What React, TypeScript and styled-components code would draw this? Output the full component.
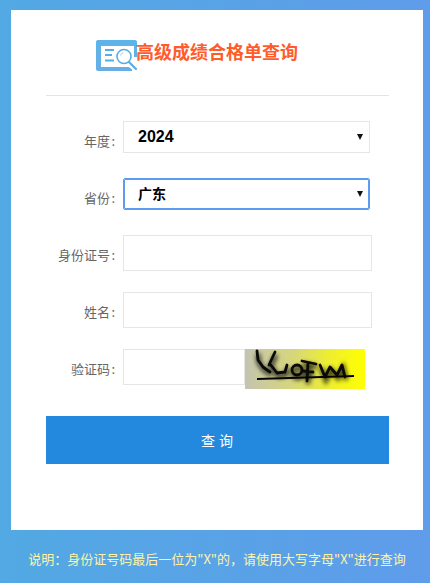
import React from "react";
import styled, { createGlobalStyle } from "styled-components";

const Global = createGlobalStyle`
  html, body { margin: 0; padding: 0; height: 100%; }
  body { font-family: "Noto Sans CJK SC", "Liberation Sans", sans-serif; }
  * { box-sizing: border-box; }
`;

const Page = styled.div`
  width: 430px;
  height: 583px;
  padding: 10px 7px 0 11px;
  background: linear-gradient(90deg, #52a9e3 0%, #5f9cea 100%);
  overflow: hidden;
`;

const Card = styled.main`
  width: 412px;
  height: 520px;
  background: #fff;
  padding: 0 34px 0 35px;
`;

const Header = styled.header`
  height: 86px;
  border-bottom: 1px solid #e4e4e4;
  padding: 30px 0 0 50px;
  display: flex;
  align-items: flex-start;
`;

const Logo = styled.svg`
  width: 42px;
  height: 32px;
  flex: none;
  margin-right: -1px;
`;

const Title = styled.h1`
  margin: -1px 0 0 -1px;
  font-size: 18px;
  line-height: 24px;
  font-weight: 700;
  color: #ff5b2b;
  white-space: nowrap;
`;

const Form = styled.form`
  padding-top: 25px;
`;

const Row = styled.div`
  height: 57px;
  display: flex;
  align-items: flex-start;
`;

const Label = styled.label`
  width: 69px;
  flex: none;
  margin-right: 8px;
  font-size: 13px;
  line-height: 40px;
  color: #666;
  text-align: right;
  white-space: nowrap;

  &::after {
    content: ":";
    display: inline-block;
    width: 5px;
    text-align: right;
  }
`;

const SelectWrap = styled.div`
  position: relative;
  width: 247px;
  height: 32px;
`;

const Select = styled.select<{ $focused?: boolean; $latin?: boolean }>`
  appearance: none;
  width: 100%;
  height: 100%;
  margin: 0;
  padding: 0 0 2px 14px;
  background: #fff;
  border: 1px solid ${(p) => (p.$focused ? "#5b9bf0" : "#e6e6e6")};
  outline: ${(p) => (p.$focused ? "1px solid #5b9bf0" : "none")};
  outline-offset: -2px;
  border-radius: ${(p) => (p.$focused ? "2px" : "0")};
  font-family: ${(p) => (p.$latin ? '"Liberation Sans", sans-serif' : "inherit")};
  font-size: ${(p) => (p.$latin ? "16px" : "14px")};
  font-weight: 700;
  color: #000;
`;

const Arrow = styled.svg`
  position: absolute;
  top: 13px;
  right: 7px;
  width: 6px;
  height: 6px;
  pointer-events: none;
`;

const Input = styled.input<{ $w?: number }>`
  width: ${(p) => p.$w ?? 249}px;
  height: 36px;
  flex: none;
  padding: 0 10px;
  background: #fff;
  border: 1px solid #e6e6e6;
  outline: none;
  font-size: 14px;
`;

const Captcha = styled.svg`
  width: 120px;
  height: 40px;
  flex: none;
  display: block;
`;

const Submit = styled.button`
  display: block;
  width: 343px;
  height: 48px;
  margin-top: 10px;
  padding: 0 0 0 3px;
  border: 0;
  background: #2389df;
  color: #fff;
  font-family: inherit;
  font-size: 14px;
  letter-spacing: 4px;
`;

const Note = styled.p`
  width: 412px;
  margin: 0;
  padding-top: 19px;
  font-size: 13px;
  line-height: 20px;
  color: #fff3a6;
  text-align: center;
  white-space: nowrap;
`;

const SelectArrow = () => (
  <Arrow viewBox="0 0 6 6">
    <path d="M0 0H6L3 6Z" fill="#111" />
  </Arrow>
);

const NOTE_COLON = "\uFF1A";
const NOTE_COMMA = "\uFF0C";

export default function App() {
  return (
    <Page>
      <Global />
      <Card>
        <Header>
          <Logo viewBox="0 0 42 32">
            <defs>
              <linearGradient id="logoBg" x1="0" y1="0" x2="0" y2="1">
                <stop offset="0" stopColor="#5cb4ea" />
                <stop offset="1" stopColor="#68aee6" />
              </linearGradient>
            </defs>
            <path d="M2 0H39a2 2 0 0 1 2 2V17H36V31H2a2 2 0 0 1-2-2V2a2 2 0 0 1 2-2Z" fill="url(#logoBg)" />
            <rect x="5" y="6" width="33" height="21" fill="#fff" />
            <path d="M9 10H18M9 15H16M9 20.5H18" stroke="#58ade5" strokeWidth="2" fill="none" />
            <path d="M33 24L41 30" stroke="#fff" strokeWidth="5" />
            <circle cx="28" cy="16.5" r="7" fill="#fff" stroke="#58ade5" strokeWidth="1.6" />
            <path d="M33 22L40 29" stroke="#58ade5" strokeWidth="2.2" strokeLinecap="round" />
            <path d="M24.5 15.5a3.8 3.8 0 0 1 3-3" stroke="#a9d4f1" strokeWidth="1.2" fill="none" />
          </Logo>
          <Title>高级成绩合格单查询</Title>
        </Header>
        <Form>
          <Row>
            <Label>年度</Label>
            <SelectWrap>
              <Select $latin defaultValue="2024">
                <option>2024</option>
              </Select>
              <SelectArrow />
            </SelectWrap>
          </Row>
          <Row>
            <Label>省份</Label>
            <SelectWrap>
              <Select $focused defaultValue="广东">
                <option>广东</option>
              </Select>
              <SelectArrow />
            </SelectWrap>
          </Row>
          <Row>
            <Label>身份证号</Label>
            <Input />
          </Row>
          <Row>
            <Label>姓名</Label>
            <Input />
          </Row>
          <Row>
            <Label>验证码</Label>
            <Input $w={122} />
            <Captcha viewBox="0 0 120 40">
              <defs>
                <linearGradient id="capBg" x1="0" y1="0" x2="1" y2="0">
                  <stop offset="0" stopColor="#c4c4b0" />
                  <stop offset="0.4" stopColor="#d6d67c" />
                  <stop offset="0.7" stopColor="#eeee30" />
                  <stop offset="1" stopColor="#ffff00" />
                </linearGradient>
                <filter id="capBlur" x="-10%" y="-30%" width="120%" height="160%">
                  <feGaussianBlur stdDeviation="2.2" />
                </filter>
              </defs>
              <rect width="120" height="40" fill="url(#capBg)" />
              <g fill="none" stroke="#101008" strokeWidth="4.5" opacity="0.8" filter="url(#capBlur)" transform="translate(1 3)">
                <path d="M12 2L13 11L18 18L25 23M30 3L24 16M25 15L32 24L40 23L42 16" />
                <circle cx="52" cy="21" r="5" />
                <path d="M63 14L62 32M57 12L71 15M58 22L68 23M75 16L80 28L85 18L92 26L97 16L100 28" />
              </g>
              <g fill="none" stroke="#0a0a0a" strokeWidth="2.8" strokeLinecap="round" strokeLinejoin="round">
                <path d="M12 2L13 11L18 18L25 23M30 3L24 16M25 15L32 24L40 23L42 16" />
                <circle cx="52" cy="21" r="5" />
                <path d="M63 14L62 32M57 12L71 15M58 22L68 23M75 16L80 28L85 18L92 26L97 16L100 28" />
              </g>
              <path d="M12 30L109 27" stroke="#050505" strokeWidth="2" fill="none" />
            </Captcha>
          </Row>
          <Submit type="button">查询</Submit>
        </Form>
      </Card>
      <Note>
        说明{NOTE_COLON}身份证号码最后一位为"X"的{NOTE_COMMA}请使用大写字母"X"进行查询
      </Note>
    </Page>
  );
}
